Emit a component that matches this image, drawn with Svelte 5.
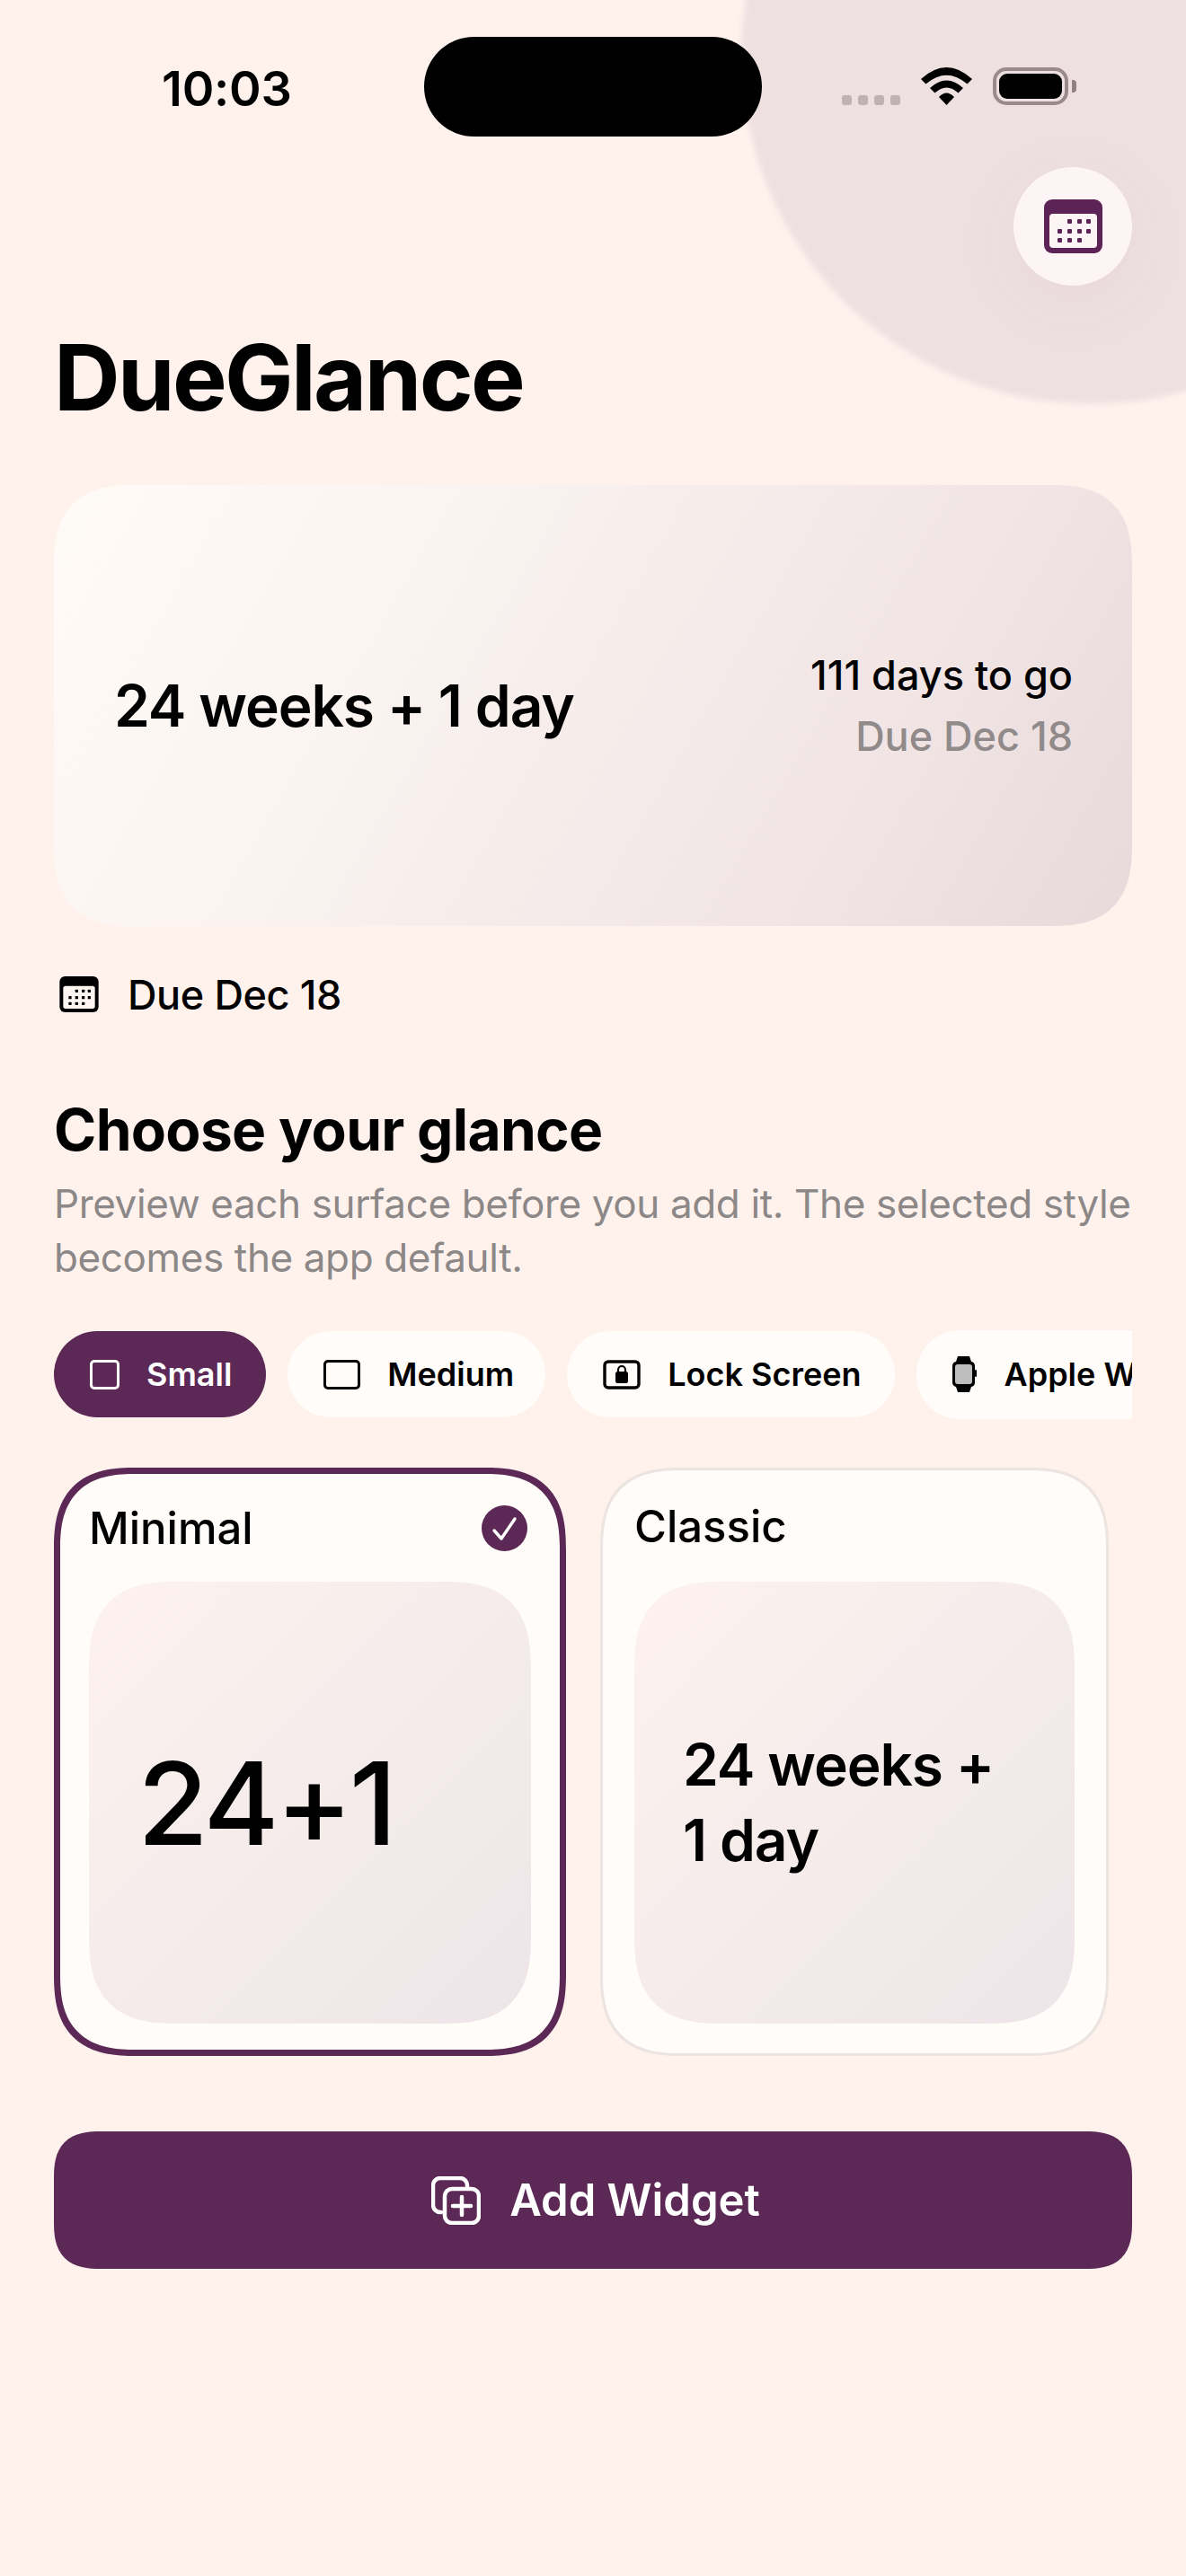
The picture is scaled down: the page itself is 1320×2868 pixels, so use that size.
<script lang="ts">
	const chips = [
		{ id: 'small', label: 'Small', active: true },
		{ id: 'medium', label: 'Medium', active: false },
		{ id: 'lock', label: 'Lock Screen', active: false },
		{ id: 'watch', label: 'Apple Watch', active: false }
	];

	// calendar glyph dots, left to right per row
	const dotCols = [15, 26, 37, 47];
	const dotRows = [
		{ y: 22, cols: [1, 2, 3] },
		{ y: 33, cols: [0, 1, 2, 3] },
		{ y: 43, cols: [0, 1, 2] }
	];
</script>

{#snippet calendar(cls: string)}
	<svg class={cls} viewBox="0 0 65 60" aria-hidden="true">
		<rect class="cal-body" width="65" height="60" rx="9" />
		<rect class="cal-window" x="6" y="16" width="53" height="38" rx="4" />
		{#each dotRows as row}
			{#each row.cols as c}
				<rect class="cal-body" x={dotCols[c]} y={row.y} width="5" height="5" rx="1" />
			{/each}
		{/each}
	</svg>
{/snippet}

<main class="screen">
	<div class="glow"></div>

	<header class="status">
		<div class="time">10:03</div>
		<div class="island"></div>
		<div class="sys">
			<div class="signal"><i></i><i></i><i></i><i></i></div>
			<svg class="wifi" viewBox="0 0 57 42" aria-hidden="true">
				<path d="M0 13Q28.5-13 57 13L51.5 18.5Q28.5-1 5.5 18.5Z" />
				<path d="M10 23Q28.5 6 47 23L41.5 28.5Q28.5 16.5 15.5 28.5Z" />
				<path d="M20 33Q28.5 24 37 33L28.5 42Z" />
			</svg>
			<div class="battery"><div class="level"></div></div>
			<div class="nub"></div>
		</div>
	</header>

	<div class="top-action">
		<button class="round-btn" aria-label="Calendar">
			{@render calendar('cal-plum')}
		</button>
	</div>

	<h1>DueGlance</h1>

	<section class="hero">
		<div class="hero-main">24 weeks + 1 day</div>
		<div class="hero-side">
			<div>111 days to go</div>
			<div class="muted">Due Dec 18</div>
		</div>
	</section>

	<div class="due-row">
		{@render calendar('cal-black')}
		<span>Due Dec 18</span>
	</div>

	<h2>Choose your glance</h2>
	<p class="desc">Preview each surface before you add it. The selected style<br />becomes the app default.</p>

	<div class="chips">
		{#each chips as chip}
			<button class="chip chip-{chip.id}" class:active={chip.active}>
				{#if chip.id === 'small'}
					<span class="shape small-shape"></span>
				{:else if chip.id === 'medium'}
					<span class="shape medium-shape"></span>
				{:else if chip.id === 'lock'}
					<svg class="lock-icon" viewBox="0 0 42 33" aria-hidden="true">
						<rect x="2" y="2" width="38" height="29" rx="4" fill="none" stroke="#000" stroke-width="3.4" />
						<rect x="14" y="13" width="14" height="13" rx="2.5" fill="#000" />
						<path d="M17 14v-3a4 4 0 0 1 8 0v3" fill="none" stroke="#000" stroke-width="2.2" />
					</svg>
				{:else}
					<svg class="watch-icon" viewBox="0 0 27 40" aria-hidden="true">
						<path d="M6 0h13l2 6a5 5 0 0 1 4 5v18a5 5 0 0 1-4 5l-2 6H6l-2-6a5 5 0 0 1-4-5V11a5 5 0 0 1 4-5Z" fill="#000" />
						<rect x="25" y="15" width="2" height="8" rx="1" fill="#000" />
						<rect x="3" y="9" width="19" height="22" rx="3" fill="#bdbdbd" />
					</svg>
				{/if}
				<span>{chip.label}</span>
			</button>
		{/each}
	</div>

	<div class="cards">
		<article class="card selected">
			<div class="card-head">
				<span>Minimal</span>
				<svg class="check" viewBox="0 0 51 51" aria-hidden="true">
					<circle cx="25.5" cy="25.5" r="25.5" fill="#5c2856" />
					<path d="M14 28l8 9L37 15" fill="none" stroke="#fff" stroke-width="3.4" stroke-linecap="round" stroke-linejoin="round" />
				</svg>
			</div>
			<div class="preview"><div class="big">24+1</div></div>
		</article>
		<article class="card">
			<div class="card-head"><span>Classic</span></div>
			<div class="preview"><div class="mid">24 weeks +<br />1 day</div></div>
		</article>
	</div>

	<button class="add">
		<svg class="add-icon" viewBox="0 0 55 54" aria-hidden="true">
			<path d="M11 40h-1a8 8 0 0 1-8-8V10a8 8 0 0 1 8-8h22a8 8 0 0 1 8 8v1" />
			<rect x="15" y="14" width="38" height="38" rx="8" />
			<path d="M24 33h20M34 23v20" />
		</svg>
		<span>Add Widget</span>
	</button>
</main>

<style>
	:global(body) {
		margin: 0;
		background: #fff2ed;
	}

	.screen {
		position: relative;
		width: 1320px;
		height: 2868px;
		padding: 0 60px;
		box-sizing: border-box;
		overflow: hidden;
		background: #fff2ed;
		color: #000;
		font-family: Inter, 'Liberation Sans', sans-serif;
	}

	button {
		font-family: inherit;
		border: 0;
		padding: 0;
	}

	.glow {
		position: absolute;
		left: 825px;
		top: -330px;
		width: 780px;
		height: 780px;
		border-radius: 50%;
		background: #eee0e1;
		filter: blur(3px);
	}

	.status {
		position: relative;
		display: grid;
		grid-template-columns: 412px 376px 1fr;
		height: 111px;
		margin-right: -60px;
		padding-top: 41px;
		align-items: start;
	}

	.time {
		padding: 31px 0 0 120px;
		font-size: 54px;
		line-height: 54px;
		font-weight: 600;
		letter-spacing: -0.2px;
	}

	.island {
		height: 111px;
		background: #000;
		border-radius: 56px;
	}

	.sys {
		display: flex;
		align-items: flex-start;
		margin: 34px 0 0 89px;
	}

	.signal {
		display: flex;
		gap: 7px;
		margin-top: 31px;
	}

	.signal i {
		width: 11px;
		height: 11px;
		border-radius: 3px;
		background: #c0b2b3;
	}

	.wifi {
		width: 57px;
		height: 42px;
		margin-left: 23px;
	}

	.battery {
		box-sizing: border-box;
		width: 84px;
		height: 42px;
		margin-left: 23px;
		padding: 3px;
		border: 4px solid #9a8a8c;
		border-radius: 15px;
	}

	.level {
		height: 100%;
		background: #000;
		border-radius: 9px;
	}

	.nub {
		width: 5px;
		height: 14px;
		margin: 14px 0 0 4px;
		background: #8f7f81;
		border-radius: 0 4px 4px 0;
	}

	.top-action {
		position: relative;
		display: flex;
		justify-content: flex-end;
		margin-top: 34px;
	}

	.round-btn {
		display: flex;
		align-items: center;
		justify-content: center;
		width: 132px;
		height: 132px;
		border-radius: 50%;
		background: #fdf4f5;
		box-shadow: 0 18px 90px rgba(92, 40, 86, 0.05);
	}

	.cal-plum {
		width: 65px;
		height: 60px;
		--cal: #5c2356;
		--win: #fdf4f5;
	}

	.cal-black {
		width: 44px;
		height: 40px;
		--cal: #000;
		--win: #fff6f2;
	}

	.cal-body {
		fill: var(--cal);
	}

	.cal-window {
		fill: var(--win);
	}

	h1 {
		position: relative;
		margin: 41px 0 0;
		font-size: 102px;
		line-height: 122px;
		font-weight: 700;
		letter-spacing: -2.6px;
	}

	.hero {
		display: flex;
		align-items: center;
		justify-content: space-between;
		box-sizing: border-box;
		height: 491px;
		margin-top: 59px;
		padding: 0 66px 0 67px;
		border-radius: 92px;
		corner-shape: superellipse(1.4);
		background: linear-gradient(120deg, #fffbf7 0%, #fbf4f1 30%, #f0e4e4 75%, #e8d9da 100%);
	}

	.hero-main {
		font-size: 64px;
		font-weight: 600;
		letter-spacing: -1.1px;
	}

	.hero-side {
		text-align: right;
		font-size: 45px;
		line-height: 68px;
		font-weight: 500;
	}

	.muted {
		color: #908a8b;
	}

	.due-row {
		display: flex;
		align-items: center;
		gap: 32px;
		height: 60px;
		margin-top: 46px;
		padding-left: 6px;
		font-size: 45px;
		font-weight: 500;
		letter-spacing: -0.4px;
	}

	h2 {
		margin: 83px 0 0;
		font-size: 64px;
		line-height: 76px;
		font-weight: 700;
		letter-spacing: -0.7px;
	}

	.desc {
		margin: 14px 0 0;
		font-size: 44px;
		line-height: 60px;
		letter-spacing: -0.38px;
		white-space: nowrap;
		color: #8d8888;
	}

	.chips {
		display: flex;
		align-items: center;
		gap: 24px;
		height: 100px;
		margin-top: 50px;
		overflow: hidden;
	}

	.chip {
		flex: none;
		display: flex;
		align-items: center;
		gap: 30px;
		height: 96px;
		padding: 0 38px 0 40px;
		border-radius: 48px;
		background: #fffcf9;
		color: #000;
		font-size: 36px;
		font-weight: 600;
	}

	.chip-medium {
		padding-right: 35px;
	}

	.chip.active {
		background: #5c2856;
		color: #fff;
	}

	.chip-watch {
		height: 99px;
	}

	.shape {
		box-sizing: border-box;
		height: 33px;
		border: 3.5px solid currentColor;
		border-radius: 5px;
	}

	.small-shape {
		width: 33px;
	}

	.medium-shape {
		width: 41px;
	}

	.lock-icon {
		width: 42px;
		height: 33px;
	}

	.watch-icon {
		width: 27px;
		height: 40px;
	}

	.cards {
		display: flex;
		gap: 38px;
		height: 655px;
		margin-top: 54px;
		overflow: hidden;
	}

	.card {
		flex: none;
		box-sizing: border-box;
		width: 566px;
		height: 655px;
		padding: 0 35px;
		border: 3px solid #ebe4e0;
		border-radius: 92px;
		corner-shape: superellipse(1.4);
		background: #fffcf9;
	}

	.card.selected {
		width: 570px;
		padding: 0 32px;
		border: 7px solid #5c2856;
	}

	.card-head {
		display: flex;
		align-items: center;
		justify-content: space-between;
		height: 124px;
		font-size: 49px;
		font-weight: 500;
	}

	.selected .card-head {
		height: 120px;
		padding-right: 4px;
	}

	.check {
		width: 51px;
		height: 51px;
	}

	.preview {
		display: flex;
		align-items: center;
		box-sizing: border-box;
		width: 490px;
		height: 492px;
		padding-left: 54px;
		border-radius: 98px;
		corner-shape: superellipse(1.4);
		background: linear-gradient(135deg, #fdf2ee, #ede5e8);
	}

	.selected .preview {
		width: 492px;
	}

	.big {
		font-size: 128px;
		font-weight: 500;
		letter-spacing: -3.5px;
	}

	.mid {
		font-size: 64px;
		line-height: 84px;
		font-weight: 600;
		letter-spacing: -1.1px;
	}

	.add {
		display: flex;
		align-items: center;
		justify-content: center;
		gap: 32px;
		width: 1200px;
		height: 153px;
		margin-top: 84px;
		padding-left: 6px;
		border-radius: 52px;
		corner-shape: superellipse(1.4);
		background: #5c2856;
		color: #fff;
		font-size: 49px;
		font-weight: 600;
	}

	.add-icon {
		width: 55px;
		height: 54px;
		fill: none;
		stroke: #fff;
		stroke-width: 4.5;
		stroke-linecap: round;
	}
</style>
